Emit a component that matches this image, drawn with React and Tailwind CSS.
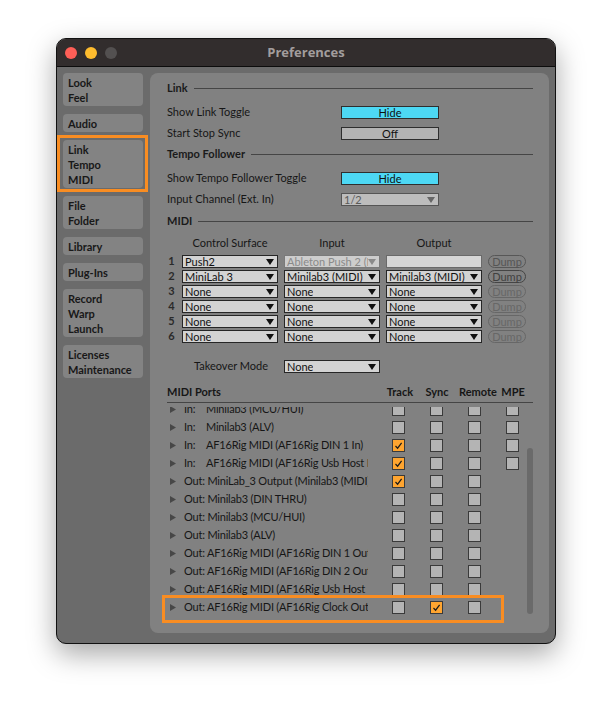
import React from 'react';

// Ableton Live — Preferences / Link Tempo MIDI tab

const sideItems = [
  { lines: ['Look', 'Feel'] },
  { lines: ['Audio'] },
  { lines: ['Link', 'Tempo', 'MIDI'], marked: true },
  { lines: ['File', 'Folder'] },
  { lines: ['Library'] },
  { lines: ['Plug-Ins'] },
  { lines: ['Record', 'Warp', 'Launch'] },
  { lines: ['Licenses', 'Maintenance'] },
];

const surfaces = [
  { n: 1, cs: 'Push2', inp: 'Ableton Push 2 (Live Port)', out: '', inDisabled: true, dump: 'mid' },
  { n: 2, cs: 'MiniLab 3', inp: 'Minilab3 (MIDI)', out: 'Minilab3 (MIDI)', dump: 'dark' },
  { n: 3, cs: 'None', inp: 'None', out: 'None', dump: 'light' },
  { n: 4, cs: 'None', inp: 'None', out: 'None', dump: 'light' },
  { n: 5, cs: 'None', inp: 'None', out: 'None', dump: 'light' },
  { n: 6, cs: 'None', inp: 'None', out: 'None', dump: 'light' },
];

const ports = [
  { dir: 'In:', name: 'Minilab3 (MCU/HUI)', cb: [0, 0, 0, 0] },
  { dir: 'In:', name: 'Minilab3 (ALV)', cb: [0, 0, 0, 0] },
  { dir: 'In:', name: 'AF16Rig MIDI (AF16Rig DIN 1 In)', cb: [1, 0, 0, 0] },
  { dir: 'In:', name: 'AF16Rig MIDI (AF16Rig Usb Host MIDI)', cb: [1, 0, 0, 0] },
  { dir: 'Out:', name: 'MiniLab_3 Output (Minilab3 (MIDI))', cb: [1, 0, 0] },
  { dir: 'Out:', name: 'Minilab3 (DIN THRU)', cb: [0, 0, 0] },
  { dir: 'Out:', name: 'Minilab3 (MCU/HUI)', cb: [0, 0, 0] },
  { dir: 'Out:', name: 'Minilab3 (ALV)', cb: [0, 0, 0] },
  { dir: 'Out:', name: 'AF16Rig MIDI (AF16Rig DIN 1 Out)', cb: [0, 0, 0] },
  { dir: 'Out:', name: 'AF16Rig MIDI (AF16Rig DIN 2 Out)', cb: [0, 0, 0] },
  { dir: 'Out:', name: 'AF16Rig MIDI (AF16Rig Usb Host MIDI)', cb: [0, 0, 0] },
  { dir: 'Out:', name: 'AF16Rig MIDI (AF16Rig Clock Out)', cb: [0, 1, 0], marked: true },
];

function Arrow({ color = '#111' }) {
  return (
    <svg width="8" height="6" viewBox="0 0 8 6" className="shrink-0">
      <path d="M0 0H8L4 6Z" fill={color} />
    </svg>
  );
}

function Select({ value, disabled, empty, w = 'w-[96px]' }) {
  if (empty) {
    return <div className={`${w} h-[13px] bg-[#d6d6d6] border border-[#6a6a6a]`} />;
  }
  return (
    <div
      className={`${w} h-[13px] flex items-center justify-between pl-[2px] pr-[3px] border ${
        disabled ? 'bg-[#cdcdcd] border-[#7a7a7a] text-[#8a8a8a]' : 'bg-[#d3d3d3] border-[#262626] text-[#111]'
      }`}
    >
      <span className="overflow-hidden whitespace-nowrap leading-none">{value}</span>
      <Arrow color={disabled ? '#8a8a8a' : '#111'} />
    </div>
  );
}

function Dump({ tone }) {
  const cls =
    tone === 'dark'
      ? 'text-[#404040] border-[#454545]'
      : tone === 'mid'
      ? 'text-[#555] border-[#575757]'
      : 'text-[#676767] border-[#676767]';
  return (
    <div className={`w-[38px] h-[13px] rounded-full border flex items-center justify-center leading-none ${cls}`}>
      Dump
    </div>
  );
}

function Check({ on }) {
  return (
    <div
      className={`w-[13px] h-[13px] shrink-0 border border-[#3a3a3a] flex items-center justify-center ${
        on ? 'bg-[#ffa530]' : 'bg-[#b4b4b4]'
      }`}
    >
      {on && (
        <svg width="9" height="9" viewBox="0 0 9 9">
          <path d="M1.5 5 L3.6 7.2 L7.6 1.8" fill="none" stroke="#1a1a1a" strokeWidth="1.2" />
        </svg>
      )}
    </div>
  );
}

function Heading({ children, className = '' }) {
  return (
    <div className={`h-[21px] flex items-center gap-[6px] ${className}`}>
      <span className="font-bold text-[#1a1a1a]">{children}</span>
      <div className="flex-1 h-px bg-[#454545]" />
    </div>
  );
}

function Toggle({ label, bg }) {
  return (
    <div className={`w-[98px] h-[13px] border border-[#2e2e2e] flex items-center justify-center leading-none text-[#111] ${bg}`}>
      {label}
    </div>
  );
}

export default function App() {
  return (
    <div className="w-[612px] h-[718px] bg-white pt-[38px] pl-[56px] [font-family:Lato,sans-serif] text-[11px]">
      <div className="w-[500px] h-[606px] rounded-[10px] border border-[#111] bg-[#6b6b6b] overflow-hidden shadow-[0_10px_28px_rgba(0,0,0,0.35)] flex flex-col">
        {/* title bar */}
        <div className="h-[28px] shrink-0 bg-[#322d2d] border-b border-[#0c0c0c] flex items-center px-[8px]">
          <div className="flex gap-[8px]">
            <span className="w-[12px] h-[12px] rounded-full bg-[#fe5f57]" />
            <span className="w-[12px] h-[12px] rounded-full bg-[#febc2e]" />
            <span className="w-[12px] h-[12px] rounded-full bg-[#535050]" />
          </div>
          <div className="flex-1 text-center -ml-[52px] [font-family:'Open_Sans',sans-serif] font-bold text-[13px] text-[#a29d9d]">
            Preferences
          </div>
        </div>

        {/* body */}
        <div className="flex-1 flex gap-[7px] pt-[6px] pl-[6px] pr-[6px] pb-[10px]">
          {/* sidebar */}
          <div className="w-[80px] flex flex-col gap-[8px]">
            {sideItems.map((it, i) => (
              <div key={i} className="relative">
                <div className="bg-[#838383] rounded-[4px] pl-[5px] pt-[2px] pb-[1px] font-bold text-[#181818] leading-[15px]">
                  {it.lines.map((l) => (
                    <div key={l}>{l}</div>
                  ))}
                </div>
                {it.marked && (
                  <div className="absolute -left-[6px] -top-[5px] w-[91px] h-[57px] border-[3px] border-[#f98d22]" />
                )}
              </div>
            ))}
          </div>

          {/* main panel */}
          <div className="flex-1 bg-[#818181] rounded-[8px] pt-[5px] pl-[17px] pr-[16px] text-[#161616]">
            <Heading>Link</Heading>
            <div className="mt-[3px] h-[21px] flex items-center">
              <span className="w-[174px]">Show Link Toggle</span>
              <Toggle label="Hide" bg="bg-[#4dd8f4]" />
            </div>
            <div className="h-[21px] flex items-center">
              <span className="w-[174px]">Start Stop Sync</span>
              <Toggle label="Off" bg="bg-[#b4b4b4]" />
            </div>
            <Heading>Tempo Follower</Heading>
            <div className="mt-[3px] h-[21px] flex items-center">
              <span className="w-[174px]">Show Tempo Follower Toggle</span>
              <Toggle label="Hide" bg="bg-[#4dd8f4]" />
            </div>
            <div className="h-[21px] flex items-center">
              <span className="w-[174px]">Input Channel (Ext. In)</span>
              <div className="w-[98px] h-[13px] border border-[#555] bg-[#bdbdbd] flex items-center justify-between pl-[2px] pr-[3px] text-[#5a5a5a] leading-none">
                <span>1/2</span>
                <Arrow color="#666" />
              </div>
            </div>
            <Heading className="mt-[1px]">MIDI</Heading>

            {/* control surfaces */}
            <div className="mt-[1px] h-[21px] flex items-center gap-[6px]">
              <span className="w-[9px]" />
              <span className="w-[96px] text-center">Control Surface</span>
              <span className="w-[96px] text-center">Input</span>
              <span className="w-[96px] text-center">Output</span>
            </div>
            {surfaces.map((s) => (
              <div key={s.n} className="h-[15px] flex items-center gap-[6px]">
                <span className="w-[9px] text-center font-bold text-[#2a2a2a]">{s.n}</span>
                <Select value={s.cs} />
                <Select value={s.inp} disabled={s.inDisabled} />
                <Select value={s.out} empty={!s.out} />
                <Dump tone={s.dump} />
              </div>
            ))}
            <div className="mt-[15px] h-[15px] flex items-center">
              <span className="w-[27px]" />
              <span className="w-[90px]">Takeover Mode</span>
              <Select value="None" />
            </div>

            {/* MIDI ports */}
            <div className="mt-[8px] h-[21px] flex items-center border-b border-[#454545]">
              <span className="w-[218px] font-bold">MIDI Ports</span>
              <span className="w-[30px] text-center font-bold">Track</span>
              <span className="w-[44px] text-center font-bold">Sync</span>
              <span className="w-[34px] text-center font-bold">Remote</span>
              <span className="w-[40px] text-center font-bold">MPE</span>
            </div>
            <div className="mt-[4px] -ml-[6px] pl-[6px] h-[218px] overflow-hidden flex">
              <div className="flex-1 -mt-[7px]">
                {ports.map((p, i) => (
                  <div key={i} className="relative h-[18px] flex items-center">
                    <span className="w-[17px] pl-[3px] flex">
                      <svg width="6" height="7" viewBox="0 0 6 7">
                        <path d="M0 0L6 3.5L0 7Z" fill="#474747" />
                      </svg>
                    </span>
                    <span className="w-[184px] overflow-hidden whitespace-nowrap tracking-[-0.2px]">
                      {p.dir === 'In:' ? <span className="inline-block w-[22px]">In:</span> : 'Out: '}
                      {p.name}
                    </span>
                    <div className="ml-[24px] flex gap-[25px]">
                      {p.cb.map((c, j) => (
                        <Check key={j} on={!!c} />
                      ))}
                    </div>
                    {p.marked && (
                      <div className="absolute -left-[5px] -top-[3px] w-[342px] h-[28px] border-[3px] border-[#f98d22]" />
                    )}
                  </div>
                ))}
              </div>
              <div className="w-[6px] shrink-0">
                <div className="mt-[41px] h-[166px] rounded-full bg-[#6a6a6a]" />
              </div>
            </div>
          </div>
        </div>
      </div>
    </div>
  );
}
